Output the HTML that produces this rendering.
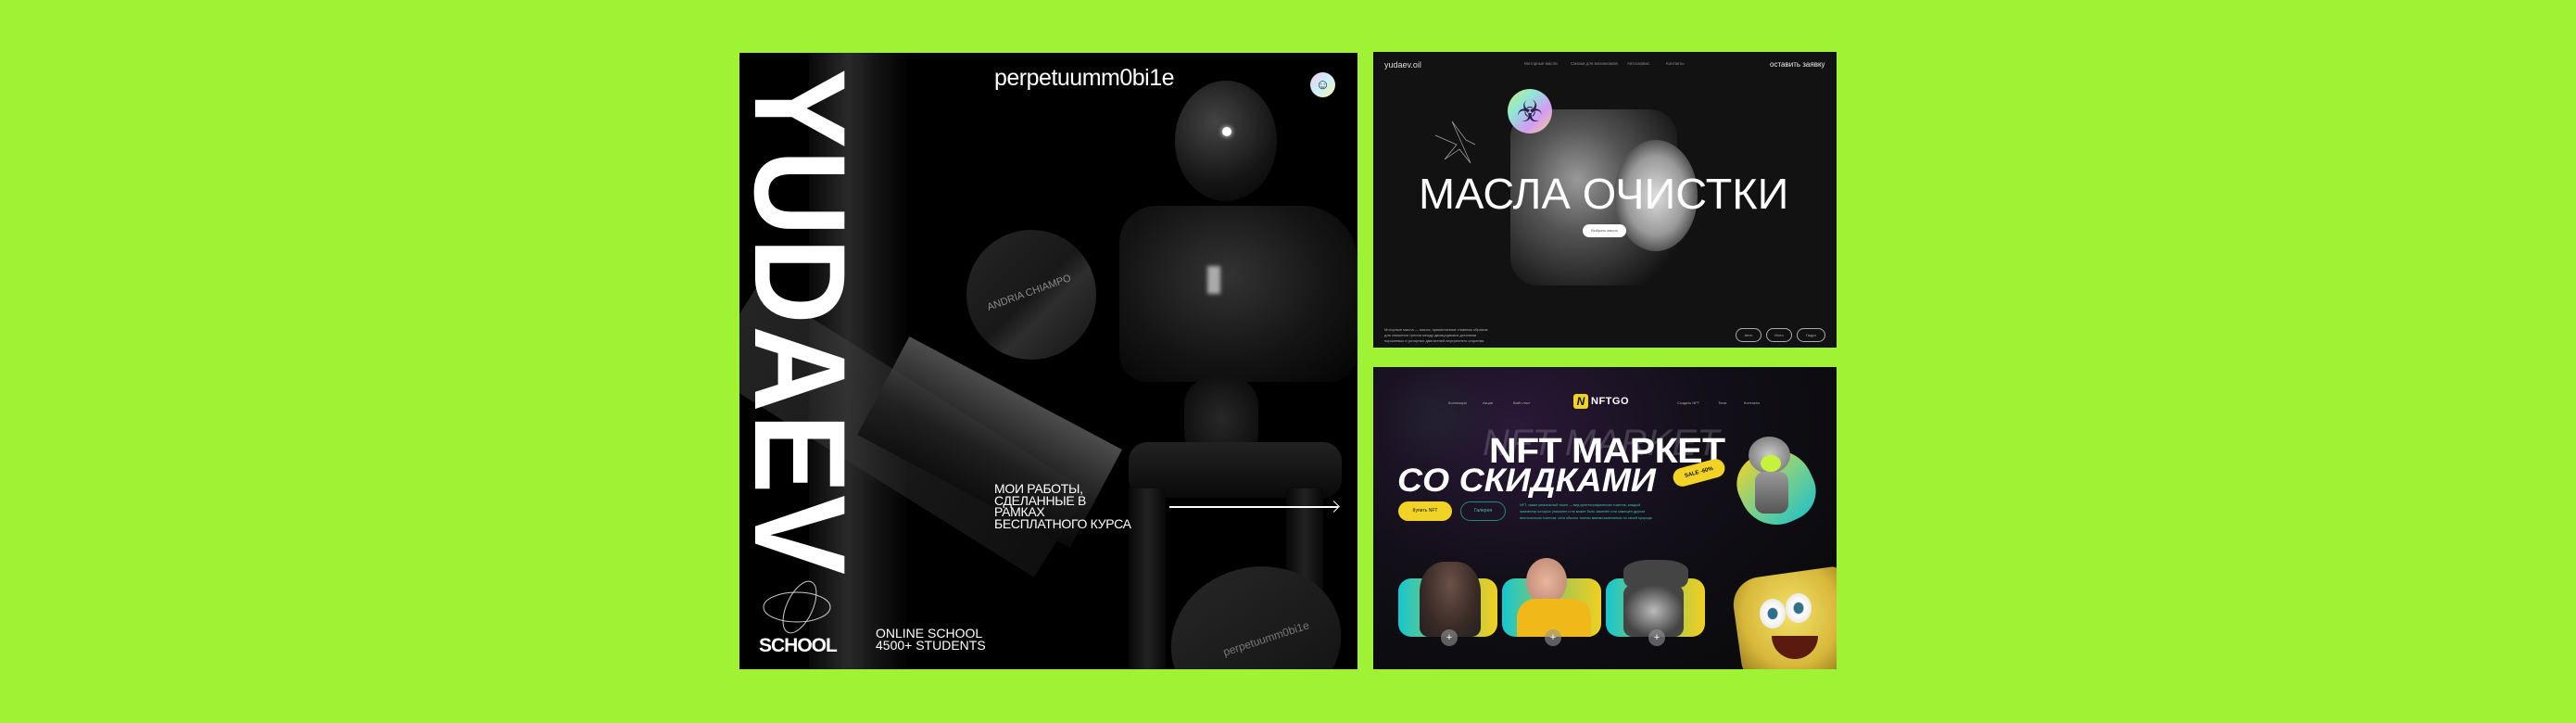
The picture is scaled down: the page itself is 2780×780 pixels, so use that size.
<!DOCTYPE html>
<html><head><meta charset="utf-8"><style>
*{margin:0;padding:0;box-sizing:border-box}
body{width:2780px;height:780px;background:#a0f234;position:relative;overflow:hidden;font-family:"Liberation Sans","DejaVu Sans",sans-serif}
.p{position:absolute;overflow:hidden}
.a{position:absolute}
</style></head><body>

<!-- LEFT PANEL -->
<div class="p" style="left:798px;top:57px;width:667px;height:665px;background:#000">
  <div class="a" style="left:75px;top:0;width:105px;height:665px;background:linear-gradient(90deg,#0a0a0a,#2e2e2e 40%,#161616 70%,#030303);opacity:.9"></div>
  <div class="a" style="left:20px;top:250px;width:420px;height:110px;background:linear-gradient(90deg,rgba(80,80,80,.45),rgba(30,30,30,.5));transform:rotate(32deg);transform-origin:0 0"></div>
  <div class="a" style="left:140px;top:360px;width:260px;height:120px;background:linear-gradient(180deg,#666,#222 60%,#0c0c0c);transform:rotate(28deg);opacity:.75"></div>
  <div class="a" style="left:470px;top:30px;width:110px;height:130px;border-radius:50%;background:radial-gradient(circle at 40% 35%,#444,#151515 60%,#030303)"></div>
  <div class="a" style="left:521px;top:80px;width:10px;height:10px;border-radius:50%;background:#fff;box-shadow:0 0 6px #fff"></div>
  <div class="a" style="left:410px;top:165px;width:257px;height:190px;border-radius:40px 60px 30px 30px;background:radial-gradient(ellipse at 45% 40%,#333,#151515 55%,#030303)"></div>
  <div class="a" style="left:505px;top:230px;width:14px;height:30px;background:#aaa;filter:blur(2px)"></div>
  <div class="a" style="left:480px;top:350px;width:80px;height:90px;border-radius:30px;background:radial-gradient(#282828,#080808)"></div>
  <div class="a" style="left:420px;top:420px;width:230px;height:60px;border-radius:20px;background:linear-gradient(#222,#0a0a0a)"></div>
  <div class="a" style="left:420px;top:470px;width:40px;height:200px;background:linear-gradient(90deg,#080808,#222,#080808)"></div>
  <div class="a" style="left:590px;top:470px;width:40px;height:200px;background:linear-gradient(90deg,#080808,#222,#080808)"></div>
  <div class="a" style="left:119px;top:17px;transform-origin:0 0;transform:rotate(90deg);width:544px;height:103px">
    <div style="font-weight:700;font-size:140px;line-height:103px;color:#fff;white-space:nowrap;transform-origin:0 0;transform:scaleX(.92);letter-spacing:2px;margin-top:2px">YUDAEV</div>
  </div>
  <div class="a" style="left:275px;top:13px;font-size:25px;color:#fff;letter-spacing:-0.5px">perpetuumm0bi1e</div>
  <div class="a" style="left:616px;top:21px;width:27px;height:27px;border-radius:50%;background:linear-gradient(135deg,#f9c8e8,#c8f0ff,#fff2a8);text-align:center;font-size:15px;line-height:27px;color:#222">☺</div>
  <div class="a" style="left:245px;top:191px;width:140px;height:140px;border-radius:50%;background:linear-gradient(135deg,#262626,#181818 50%,#2e2e2e 62%,#131313)"></div>
  <div class="a" style="left:265px;top:253px;color:#8a8a8a;font-size:11px;transform:rotate(-20deg);white-space:nowrap">ANDRIA CHIAMPO</div>
  <div class="a" style="left:465px;top:555px;width:185px;height:160px;border-radius:50%;background:linear-gradient(160deg,#262626,#121212);transform:rotate(-15deg)"></div>
  <div class="a" style="left:520px;top:625px;color:#777;font-size:12px;transform:rotate(-18deg)">perpetuumm0bi1e</div>
  <div class="a" style="left:275px;top:464px;color:#fff;font-size:14px;line-height:12.5px;letter-spacing:-0.3px">МОИ РАБОТЫ,<br>СДЕЛАННЫЕ В<br>РАМКАХ<br>БЕСПЛАТНОГО КУРСА</div>
  <div class="a" style="left:464px;top:489px;width:182px;height:1.5px;background:#fff"></div>
  <div class="a" style="left:637px;top:485px;width:9px;height:9px;border-top:1.5px solid #fff;border-right:1.5px solid #fff;transform:rotate(45deg)"></div>
  <svg class="a" style="left:20px;top:565px" width="90" height="70"><g fill="none" stroke="#ccc" stroke-width="1"><ellipse cx="42" cy="33" rx="36" ry="16"/><ellipse cx="45" cy="33" rx="14" ry="30" transform="rotate(25 45 33)"/></g></svg>
  <div class="a" style="left:21px;top:628px;color:#fff;font-size:21px;font-weight:700;letter-spacing:-1px">SCHOOL</div>
  <div class="a" style="left:147px;top:620px;color:#fff;font-size:14px;line-height:12.5px">ONLINE SCHOOL<br>4500+ STUDENTS</div>
</div>

<!-- TOP RIGHT PANEL -->
<div class="p" style="left:1482px;top:56px;width:500px;height:319px;background:#121212">
  <div class="a" style="left:12px;top:9px;color:#ddd;font-size:9px">yudaev.oil</div>
  <div class="a" style="left:163px;top:10px;color:#888;font-size:4.5px">Моторные масла</div>
  <div class="a" style="left:213px;top:10px;color:#888;font-size:4.5px">Смазки для механизмов</div>
  <div class="a" style="left:274px;top:10px;color:#888;font-size:4.5px">Автосервис</div>
  <div class="a" style="left:316px;top:10px;color:#888;font-size:4.5px">Контакты</div>
  <div class="a" style="left:428px;top:9px;color:#eee;font-size:8px">оставить заявку</div>
  <div class="a" style="left:148px;top:62px;width:180px;height:190px;border-radius:30px;background:radial-gradient(ellipse at 40% 40%,#999,#555 35%,#262626 70%,#121212 85%)"></div>
  <div class="a" style="left:260px;top:95px;width:90px;height:120px;border-radius:50%;background:radial-gradient(#ddd,#999 50%,#444 75%,transparent 80%)"></div>
  <div class="a" style="left:145px;top:40px;width:48px;height:48px;border-radius:50%;background:linear-gradient(135deg,#c9f07a,#8fe6d7,#d39cf5,#f3d08a);text-align:center;line-height:48px;font-size:32px;color:#2a2050">☣</div>
  <svg class="a" style="left:65px;top:70px" width="60" height="60"><path d="M2 20 L25 30 L12 46 L28 35 L40 50 L20 5 L35 25 L45 30" fill="none" stroke="#aaa" stroke-width=".7"/></svg>
  <div class="a" style="left:49px;top:130px;color:#fff;font-size:46px;line-height:46px;white-space:nowrap;transform:scaleX(1.02);transform-origin:0 0">МАСЛА ОЧИСТКИ</div>
  <div class="a" style="left:226px;top:186px;width:47px;height:14px;border-radius:7px;background:#fff;color:#555;font-size:4px;text-align:center;line-height:14px">Выбрать масло</div>
  <div class="a" style="left:12px;top:297px;color:#aaa;font-size:4px;line-height:6px">Моторные масла — масла, применяемые главным образом<br>для снижения трения между движущимися деталями<br>поршневых и роторных двигателей внутреннего сгорания.</div>
  <div class="a" style="left:391px;top:298px;width:28px;height:15px;border:1px solid #aaa;border-radius:8px;color:#aaa;font-size:4px;text-align:center;line-height:13px">Авто</div>
  <div class="a" style="left:424px;top:298px;width:28px;height:15px;border:1px solid #aaa;border-radius:8px;color:#aaa;font-size:4px;text-align:center;line-height:13px">Мото</div>
  <div class="a" style="left:457px;top:298px;width:31px;height:15px;border:1px solid #aaa;border-radius:8px;color:#aaa;font-size:4px;text-align:center;line-height:13px">Гидро</div>
</div>

<!-- BOTTOM RIGHT PANEL -->
<div class="p" style="left:1482px;top:396px;width:500px;height:326px;background:radial-gradient(ellipse at 30% 20%,#2a1838,#120f18 45%,#0b0b0e 80%)">
  <div class="a" style="left:0;top:0;width:140px;height:110px;background:radial-gradient(#232330,transparent 70%);opacity:.8"></div>
  <div class="a" style="left:118px;top:60px;color:rgba(180,180,190,.25);font-size:40px;font-style:italic;white-space:nowrap">NFT MARKET</div>
  <div class="a" style="left:81px;top:36px;color:#aaa;font-size:4px">Коллекции</div>
  <div class="a" style="left:118px;top:36px;color:#aaa;font-size:4px">Акции</div>
  <div class="a" style="left:151px;top:36px;color:#aaa;font-size:4px">Вайт-лист</div>
  <div class="a" style="left:328px;top:36px;color:#aaa;font-size:4px">Создать NFT</div>
  <div class="a" style="left:372px;top:36px;color:#aaa;font-size:4px">Топы</div>
  <div class="a" style="left:400px;top:36px;color:#aaa;font-size:4px">Контакты</div>
  <div class="a" style="left:216px;top:29px;width:16px;height:16px;background:#f1d326;border-radius:3px;color:#111;font-weight:700;font-style:italic;font-size:12px;text-align:center;line-height:16px">N</div>
  <div class="a" style="left:235px;top:31px;color:#fff;font-size:11px;font-weight:700;letter-spacing:.5px">NFTGO</div>
  <div class="a" style="left:125px;top:70px;color:#fff;font-size:38px;font-weight:700;white-space:nowrap;letter-spacing:-.5px;transform:scaleX(1.08);transform-origin:0 0">NFT МАРКЕТ</div>
  <div class="a" style="left:26px;top:103px;color:#fff;font-size:35px;font-style:italic;font-weight:700;white-space:nowrap;transform:scaleX(1.07);transform-origin:0 0">СО СКИДКАМИ</div>
  <div class="a" style="left:323px;top:104px;width:57px;height:20px;border-radius:10px;background:#f1d326;transform:rotate(-15deg);color:#111;font-size:6px;font-weight:700;text-align:center;line-height:20px">SALE -60%</div>
  <div class="a" style="left:27px;top:145px;width:58px;height:21px;border-radius:11px;background:#f1d326;color:#111;font-size:5px;text-align:center;line-height:21px">Купить NFT</div>
  <div class="a" style="left:94px;top:145px;width:49px;height:21px;border-radius:11px;border:1px solid #1e8a7a;color:#49c4aa;font-size:5px;text-align:center;line-height:19px">Галерея</div>
  <div class="a" style="left:158px;top:146px;color:#39c7a6;font-size:3.8px;line-height:7px">NFT, также уникальный токен — вид криптографических токенов, каждый<br>экземпляр которых уникален и не может быть заменён или замещён другим<br>аналогичным токеном, хотя обычно токены взаимозаменяемы по своей природе.</div>
  <div class="a" style="left:395px;top:90px;width:80px;height:80px;border-radius:40% 50% 40% 50%;background:linear-gradient(160deg,#f1d326,#7bd08a 50%,#1fc0c7);transform:rotate(-25deg)"></div>
  <div class="a" style="left:405px;top:75px;width:45px;height:40px;border-radius:50%;background:radial-gradient(#ccc,#666)"></div>
  <div class="a" style="left:418px;top:95px;width:22px;height:18px;border-radius:50%;background:#c5f23a"></div>
  <div class="a" style="left:412px;top:113px;width:36px;height:45px;border-radius:10px;background:linear-gradient(#999,#555)"></div>
  <div class="a" style="left:27px;top:228px;width:107px;height:63px;border-radius:14px;background:linear-gradient(90deg,#16c7cf,#a8c84e 60%,#f1cf22)"></div>
  <div class="a" style="left:139px;top:228px;width:107px;height:63px;border-radius:14px;background:linear-gradient(90deg,#16c7cf,#a8c84e 60%,#f1cf22)"></div>
  <div class="a" style="left:251px;top:228px;width:107px;height:63px;border-radius:14px;background:linear-gradient(90deg,#16c7cf,#a8c84e 60%,#f1cf22)"></div>
  <div class="a" style="left:50px;top:210px;width:66px;height:81px;border-radius:40% 40% 10px 10px;background:radial-gradient(ellipse at 50% 30%,#6b5148,#3a2a26 60%,#222)"></div>
  <div class="a" style="left:165px;top:206px;width:44px;height:50px;border-radius:50%;background:radial-gradient(#e8b49a,#b78270)"></div>
  <div class="a" style="left:155px;top:250px;width:80px;height:41px;border-radius:20px 20px 0 0;background:#f0b818"></div>
  <div class="a" style="left:270px;top:208px;width:70px;height:30px;border-radius:40% 40% 10px 10px;background:#444"></div>
  <div class="a" style="left:270px;top:235px;width:65px;height:56px;border-radius:10px;background:radial-gradient(#bbb,#444 70%)"></div>
  <div class="a" style="left:73px;top:283px;width:18px;height:18px;border-radius:50%;background:rgba(150,150,150,.6);color:#fff;font-size:11px;text-align:center;line-height:18px">+</div>
  <div class="a" style="left:185px;top:283px;width:18px;height:18px;border-radius:50%;background:rgba(150,150,150,.6);color:#fff;font-size:11px;text-align:center;line-height:18px">+</div>
  <div class="a" style="left:297px;top:283px;width:18px;height:18px;border-radius:50%;background:rgba(150,150,150,.6);color:#fff;font-size:11px;text-align:center;line-height:18px">+</div>
  <div class="a" style="left:392px;top:222px;width:120px;height:110px;border-radius:30px 10px 0 20px;background:radial-gradient(ellipse at 50% 40%,#f2e26a,#d8b83a 60%,#8a7020);transform:rotate(-8deg)"></div>
  <div class="a" style="left:417px;top:250px;width:28px;height:32px;border-radius:50%;background:radial-gradient(#2f6f8a 25%,#fff 30%,#ddd)"></div>
  <div class="a" style="left:445px;top:244px;width:28px;height:32px;border-radius:50%;background:radial-gradient(#2f6f8a 25%,#fff 30%,#ddd)"></div>
  <div class="a" style="left:430px;top:290px;width:50px;height:25px;border-radius:0 0 25px 25px;background:#5a1a10"></div>
</div>

</body></html>
